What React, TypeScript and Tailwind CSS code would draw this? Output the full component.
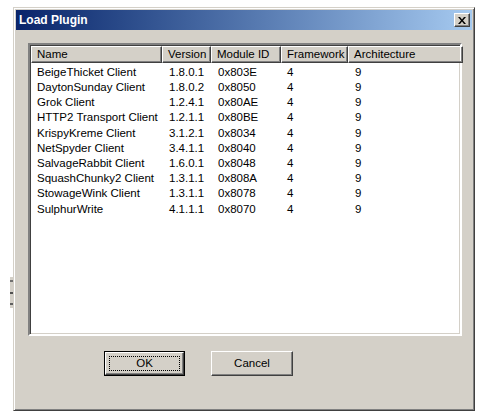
import React from 'react'

interface Plugin {
  name: string
  version: string
  moduleId: string
  framework: string
  arch: string
}

const plugins: Plugin[] = [
  { name: 'BeigeThicket Client', version: '1.8.0.1', moduleId: '0x803E', framework: '4', arch: '9' },
  { name: 'DaytonSunday Client', version: '1.8.0.2', moduleId: '0x8050', framework: '4', arch: '9' },
  { name: 'Grok Client', version: '1.2.4.1', moduleId: '0x80AE', framework: '4', arch: '9' },
  { name: 'HTTP2 Transport Client', version: '1.2.1.1', moduleId: '0x80BE', framework: '4', arch: '9' },
  { name: 'KrispyKreme Client', version: '3.1.2.1', moduleId: '0x8034', framework: '4', arch: '9' },
  { name: 'NetSpyder Client', version: '3.4.1.1', moduleId: '0x8040', framework: '4', arch: '9' },
  { name: 'SalvageRabbit Client', version: '1.6.0.1', moduleId: '0x8048', framework: '4', arch: '9' },
  { name: 'SquashChunky2 Client', version: '1.3.1.1', moduleId: '0x808A', framework: '4', arch: '9' },
  { name: 'StowageWink Client', version: '1.3.1.1', moduleId: '0x8078', framework: '4', arch: '9' },
  { name: 'SulphurWrite', version: '4.1.1.1', moduleId: '0x8070', framework: '4', arch: '9' },
]

// column widths in px, last one takes the rest
const cols = [
  { label: 'Name', w: 'w-[131px]' },
  { label: 'Version', w: 'w-[49px]' },
  { label: 'Module ID', w: 'w-[70px]' },
  { label: 'Framework', w: 'w-[67px]' },
  { label: 'Architecture', w: 'w-[115px]' },
]

const raised =
  'border border-t-white border-l-white border-r-[#404040] border-b-[#404040] shadow-[inset_-1px_-1px_0_#808080]'

export default function App() {
  return (
    <div
      className="relative w-[484px] h-[414px] bg-white overflow-hidden"
      style={{ fontFamily: '"Liberation Sans", Arial, sans-serif' }}
    >
      {/* bit of another window peeking out on the left */}
      <div className="absolute left-[10px] top-[277px] w-[3px] h-[31px] bg-[#d4d0c8] flex flex-col justify-between py-[3px]">
        <div className="h-[2px] bg-[#707070]" />
        <div className="h-[2px] bg-[#505050]" />
        <div className="h-[2px] bg-[#606060]" />
      </div>

      {/* dialog */}
      <div className="absolute left-[13px] top-[7px] w-[462px] h-[404px] bg-[#d4d0c8] border border-t-[#d4d0c8] border-l-[#d4d0c8] border-r-[#404040] border-b-[#404040] shadow-[inset_1px_1px_0_#fff,inset_-1px_-1px_0_#808080] p-[2px] flex flex-col">
        {/* title bar */}
        <div className="h-[20px] flex items-center justify-between pl-[3px] pr-[2px] bg-gradient-to-r from-[#0a246a] to-[#a6caf0]">
          <span className="text-white font-bold text-[12px] leading-none">Load Plugin</span>
          <button
            className={`w-[16px] h-[14px] bg-[#d4d0c8] flex items-center justify-center ${raised}`}
          >
            <svg width="8" height="7" viewBox="0 0 8 7">
              <path d="M0 0h2l2 2.5L6 0h2L5 3.5 8 7H6L4 4.5 2 7H0l3-3.5z" fill="#000" />
            </svg>
          </button>
        </div>

        {/* list view */}
        <div className="mt-[13px] ml-[12px] w-[434px] h-[293px] bg-white border-2 border-t-[#808080] border-l-[#808080] border-r-white border-b-white shadow-[inset_1px_1px_0_#404040,inset_-1px_-1px_0_#d4d0c8] p-[1px] flex flex-col">
          <div className="flex h-[17px] bg-[#d4d0c8] shrink-0">
            {cols.map((c) => (
              <div
                key={c.label}
                className={`${c.w} shrink-0 h-full flex items-center pl-[5px] text-[11.5px] text-black ${raised}`}
              >
                {c.label}
              </div>
            ))}
          </div>
          <div className="pt-[2px]">
            {plugins.map((p) => (
              <div key={p.name} className="flex h-[15.2px] items-center text-[11.5px] text-black leading-none">
                <div className="w-[131px] pl-[6px] whitespace-nowrap">{p.name}</div>
                <div className="w-[49px] pl-[7px]">{p.version}</div>
                <div className="w-[70px] pl-[7px]">{p.moduleId}</div>
                <div className="w-[67px] pl-[6px]">{p.framework}</div>
                <div className="pl-[7px]">{p.arch}</div>
              </div>
            ))}
          </div>
        </div>

        {/* buttons */}
        <div className="mt-[15px] ml-[88px] flex gap-[26px]">
          <button className="w-[81px] h-[25px] border border-black bg-[#d4d0c8] p-0">
            <div className={`w-full h-full flex items-center justify-center ${raised} border-t-white`}>
              <span className="w-[71px] h-[15px] border border-dotted border-black flex items-center justify-center text-[11.5px] text-black">
                OK
              </span>
            </div>
          </button>
          <button
            className={`w-[82px] h-[25px] bg-[#d4d0c8] flex items-center justify-center text-[11.5px] text-black ${raised}`}
          >
            Cancel
          </button>
        </div>
      </div>
    </div>
  )
}
